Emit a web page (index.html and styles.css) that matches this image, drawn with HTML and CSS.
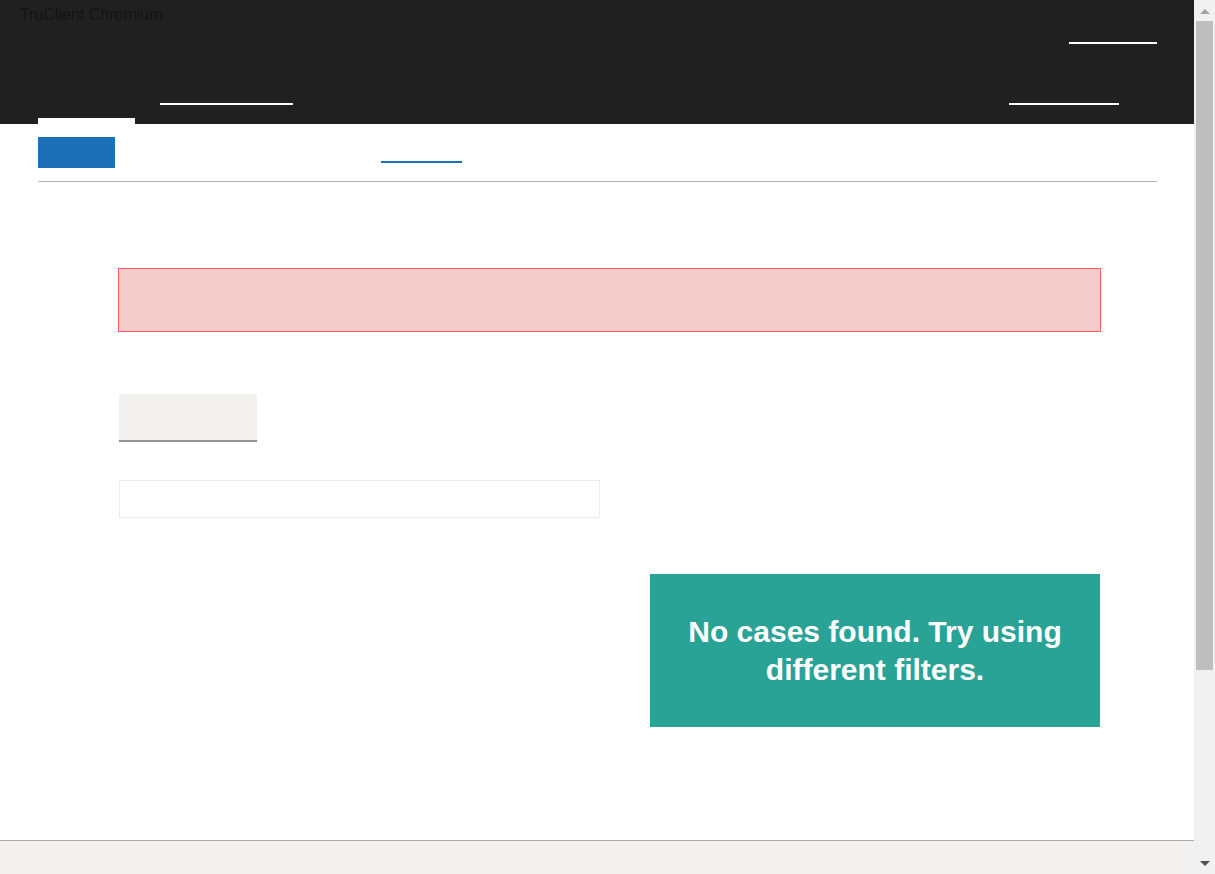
FILE: index.html
```html
<!DOCTYPE html>
<html lang="en">
<head>
<meta charset="utf-8">
<title>TruClient Chromium</title>
<link rel="stylesheet" href="styles.css">
</head>
<body>
<div class="app">
  <div class="page">
    <header class="header">
      <div class="brand">TruClient Chromium</div>
      <div class="top-links"><span class="top-link"></span></div>
      <div class="nav-row">
        <span class="nav-link nav-link-left"></span>
        <span class="nav-link nav-link-right"></span>
      </div>
      <div class="tabs"><span class="tab-active"></span></div>
    </header>
    <nav class="subnav">
      <span class="subnav-button"></span>
      <span class="subnav-link"></span>
    </nav>
    <main class="main">
      <div class="alert"></div>
      <div class="pivot"></div>
      <div class="search"></div>
      <div class="empty">No cases found. Try using different filters.</div>
    </main>
    <footer class="footer"></footer>
  </div>
  <div class="scrollbar">
    <span class="arrow-up"></span>
    <span class="thumb"></span>
    <span class="arrow-down"></span>
  </div>
</div>
</body>
</html>
```
FILE: styles.css
```css
html, body {
  margin: 0;
  padding: 0;
  height: 100%;
  overflow: hidden;
  font-family: "Liberation Sans", Arial, sans-serif;
  background: #ffffff;
}

.app {
  display: grid;
  grid-template-columns: 1fr 21px;
  height: 874px;
}

.page {
  display: flex;
  flex-direction: column;
  min-width: 0;
}

/* Header */
.header {
  height: 124px;
  background: #202020;
  display: flex;
  flex-direction: column;
  flex: none;
}

.brand {
  margin: 6px 0 0 20px;
  font-size: 16px;
  line-height: 18px;
  color: #141414;
}

.top-links {
  display: flex;
  justify-content: flex-end;
  padding-right: 37px;
  margin-top: 18px;
}

.top-link {
  width: 88px;
  height: 2px;
  background: #ffffff;
}

.nav-row {
  display: flex;
  justify-content: space-between;
  margin-top: 59px;
  padding: 0 75px 0 160px;
}

.nav-link {
  height: 2px;
  background: #ffffff;
}

.nav-link-left { width: 133px; }
.nav-link-right { width: 110px; }

.tabs {
  margin-top: auto;
  padding-left: 38px;
  display: flex;
}

.tab-active {
  width: 97px;
  height: 6px;
  background: #ffffff;
}

/* Sub navigation */
.subnav {
  flex: none;
  display: flex;
  align-items: flex-start;
  margin: 0 37px 0 38px;
  padding: 13px 0;
  border-bottom: 1px solid #b3b3b3;
}

.subnav-button {
  width: 77px;
  height: 31px;
  background: #1d6fb8;
}

.subnav-link {
  margin: 24px 0 0 266px;
  width: 81px;
  height: 2px;
  background: #1d6fb8;
}

/* Main content */
.main {
  flex: 1;
  display: flex;
  flex-direction: column;
  padding: 0 93px 0 118px;
}

.alert {
  margin-top: 86px;
  height: 62px;
  background: #f4cccc;
  border: 1px solid #ff5a5a;
}

.pivot {
  margin: 62px 0 0 1px;
  width: 138px;
  height: 46px;
  background: #f2f1f0;
  border-bottom: 2px solid #939393;
}

.search {
  margin: 38px 0 0 1px;
  width: 479px;
  height: 36px;
  border: 1px solid #ececec;
}

.empty {
  margin: 56px 0 0 532px;
  width: 450px;
  height: 153px;
  box-sizing: border-box;
  padding: 0 20px;
  background: #29a396;
  color: #ffffff;
  font-weight: bold;
  font-size: 30px;
  line-height: 38px;
  text-align: center;
  display: flex;
  align-items: center;
  justify-content: center;
}

/* Footer */
.footer {
  flex: none;
  height: 33px;
  background: #f2f1f0;
  border-top: 1px solid #aaaaaa;
}

/* Scrollbar */
.scrollbar {
  background: #f1f1f1;
  display: flex;
  flex-direction: column;
  align-items: center;
  padding-top: 9px;
}

.arrow-up {
  width: 0;
  height: 0;
  border-left: 5px solid transparent;
  border-right: 5px solid transparent;
  border-bottom: 5px solid #a3a3a3;
}

.thumb {
  margin-top: 7px;
  width: 17px;
  height: 649px;
  background: #bebebe;
}

.arrow-down {
  margin-top: auto;
  margin-bottom: 8px;
  width: 0;
  height: 0;
  border-left: 5px solid transparent;
  border-right: 5px solid transparent;
  border-top: 5px solid #505050;
}
```
